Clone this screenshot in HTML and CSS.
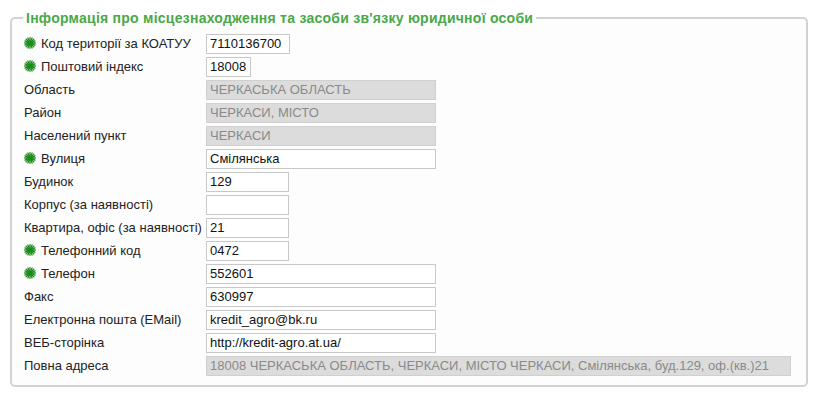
FILE: index.html
```html
<!DOCTYPE html>
<html lang="uk">
<head>
<meta charset="utf-8">
<link rel="stylesheet" href="styles.css">
</head>
<body>
<fieldset class="box">
  <legend class="box-title">Інформація про місцезнаходження та засоби зв'язку юридичної особи</legend>
  <table class="form">
    <tr><td class="lbl"><span class="req"><svg viewBox="0 0 12 12" width="12" height="12"><g stroke="#1a8a1a" stroke-width="1.3" stroke-linecap="round"><line x1="6" y1="0.7" x2="6" y2="11.3"/><line x1="0.7" y1="6" x2="11.3" y2="6"/><line x1="2.2" y1="2.2" x2="9.8" y2="9.8"/><line x1="9.8" y1="2.2" x2="2.2" y2="9.8"/><line x1="3.9" y1="1" x2="8.1" y2="11"/><line x1="8.1" y1="1" x2="3.9" y2="11"/><line x1="1" y1="3.9" x2="11" y2="8.1"/><line x1="1" y1="8.1" x2="11" y2="3.9"/></g><circle cx="6" cy="6" r="2.6" fill="#1a8a1a"/></svg></span>Код території за КОАТУУ</td><td><input class="in w-koatuu" value="7110136700"></td></tr>
    <tr><td class="lbl"><span class="req"><svg viewBox="0 0 12 12" width="12" height="12"><g stroke="#1a8a1a" stroke-width="1.3" stroke-linecap="round"><line x1="6" y1="0.7" x2="6" y2="11.3"/><line x1="0.7" y1="6" x2="11.3" y2="6"/><line x1="2.2" y1="2.2" x2="9.8" y2="9.8"/><line x1="9.8" y1="2.2" x2="2.2" y2="9.8"/><line x1="3.9" y1="1" x2="8.1" y2="11"/><line x1="8.1" y1="1" x2="3.9" y2="11"/><line x1="1" y1="3.9" x2="11" y2="8.1"/><line x1="1" y1="8.1" x2="11" y2="3.9"/></g><circle cx="6" cy="6" r="2.6" fill="#1a8a1a"/></svg></span>Поштовий індекс</td><td><input class="in w-index" value="18008"></td></tr>
    <tr><td class="lbl">Область</td><td><input class="in w-long dis" value="ЧЕРКАСЬКА ОБЛАСТЬ" disabled></td></tr>
    <tr><td class="lbl">Район</td><td><input class="in w-long dis" value="ЧЕРКАСИ, МІСТО" disabled></td></tr>
    <tr><td class="lbl">Населений пункт</td><td><input class="in w-long dis" value="ЧЕРКАСИ" disabled></td></tr>
    <tr><td class="lbl"><span class="req"><svg viewBox="0 0 12 12" width="12" height="12"><g stroke="#1a8a1a" stroke-width="1.3" stroke-linecap="round"><line x1="6" y1="0.7" x2="6" y2="11.3"/><line x1="0.7" y1="6" x2="11.3" y2="6"/><line x1="2.2" y1="2.2" x2="9.8" y2="9.8"/><line x1="9.8" y1="2.2" x2="2.2" y2="9.8"/><line x1="3.9" y1="1" x2="8.1" y2="11"/><line x1="8.1" y1="1" x2="3.9" y2="11"/><line x1="1" y1="3.9" x2="11" y2="8.1"/><line x1="1" y1="8.1" x2="11" y2="3.9"/></g><circle cx="6" cy="6" r="2.6" fill="#1a8a1a"/></svg></span>Вулиця</td><td><input class="in w-long" value="Смілянська"></td></tr>
    <tr><td class="lbl">Будинок</td><td><input class="in w-short" value="129"></td></tr>
    <tr><td class="lbl">Корпус (за наявності)</td><td><input class="in w-short" value=""></td></tr>
    <tr><td class="lbl">Квартира, офіс (за наявності)</td><td><input class="in w-short" value="21"></td></tr>
    <tr><td class="lbl"><span class="req"><svg viewBox="0 0 12 12" width="12" height="12"><g stroke="#1a8a1a" stroke-width="1.3" stroke-linecap="round"><line x1="6" y1="0.7" x2="6" y2="11.3"/><line x1="0.7" y1="6" x2="11.3" y2="6"/><line x1="2.2" y1="2.2" x2="9.8" y2="9.8"/><line x1="9.8" y1="2.2" x2="2.2" y2="9.8"/><line x1="3.9" y1="1" x2="8.1" y2="11"/><line x1="8.1" y1="1" x2="3.9" y2="11"/><line x1="1" y1="3.9" x2="11" y2="8.1"/><line x1="1" y1="8.1" x2="11" y2="3.9"/></g><circle cx="6" cy="6" r="2.6" fill="#1a8a1a"/></svg></span>Телефонний код</td><td><input class="in w-short" value="0472"></td></tr>
    <tr><td class="lbl"><span class="req"><svg viewBox="0 0 12 12" width="12" height="12"><g stroke="#1a8a1a" stroke-width="1.3" stroke-linecap="round"><line x1="6" y1="0.7" x2="6" y2="11.3"/><line x1="0.7" y1="6" x2="11.3" y2="6"/><line x1="2.2" y1="2.2" x2="9.8" y2="9.8"/><line x1="9.8" y1="2.2" x2="2.2" y2="9.8"/><line x1="3.9" y1="1" x2="8.1" y2="11"/><line x1="8.1" y1="1" x2="3.9" y2="11"/><line x1="1" y1="3.9" x2="11" y2="8.1"/><line x1="1" y1="8.1" x2="11" y2="3.9"/></g><circle cx="6" cy="6" r="2.6" fill="#1a8a1a"/></svg></span>Телефон</td><td><input class="in w-long" value="552601"></td></tr>
    <tr><td class="lbl">Факс</td><td><input class="in w-long" value="630997"></td></tr>
    <tr><td class="lbl">Електронна пошта (EMail)</td><td><input class="in w-long" value="kredit_agro@bk.ru"></td></tr>
    <tr><td class="lbl">ВЕБ-сторінка</td><td><input class="in w-long" value="http://kredit-agro.at.ua/"></td></tr>
    <tr><td class="lbl">Повна адреса</td><td><input class="in w-full dis" value="18008 ЧЕРКАСЬКА ОБЛАСТЬ, ЧЕРКАСИ, МІСТО ЧЕРКАСИ, Смілянська, буд.129, оф.(кв.)21" disabled></td></tr>
  </table>
</fieldset>
</body>
</html>
```

FILE: styles.css
```css
html, body {
  margin: 0;
  padding: 0;
  background: #ffffff;
}
body {
  font-family: "Liberation Sans", Arial, sans-serif;
  font-size: 13px;
  color: #222;
  padding: 10px 0 0 10px;
  width: 798px;
}
.box {
  margin: 0;
  padding: 0 0 8px 12px;
  border: 2px solid #d2d2d2;
  border-radius: 5px;
  background: #fdfdfd;
  min-width: 0;
}
.box-title {
  color: #4aa84a;
  font-weight: bold;
  font-size: 14px;
  letter-spacing: 0.25px;
  padding: 0 3px;
  margin-left: -1px;
  line-height: 16px;
}
.form {
  border-collapse: collapse;
  margin-top: 6px;
}
.form td {
  padding: 0;
  height: 23px;
  vertical-align: middle;
}
.lbl {
  width: 182px;
  white-space: nowrap;
  color: #222;
}
.req {
  display: inline-block;
  width: 17px;
  vertical-align: -1px;
}
.req svg {
  display: block;
}
.in {
  font-family: "Liberation Sans", Arial, sans-serif;
  font-size: 13px;
  color: #111;
  height: 20px;
  box-sizing: border-box;
  border: 1px solid #c8c8c8;
  background: #fff;
  padding: 0 3px;
  margin: 0;
  display: block;
  outline: none;
}
.dis {
  background: #dcdcdc;
  color: #8a8a8a;
  border-color: #d0d0d0;
}
.w-koatuu { width: 84px; }
.w-index { width: 45px; }
.w-short { width: 83px; }
.w-long { width: 230px; }
.w-full { width: 585px; }
```
